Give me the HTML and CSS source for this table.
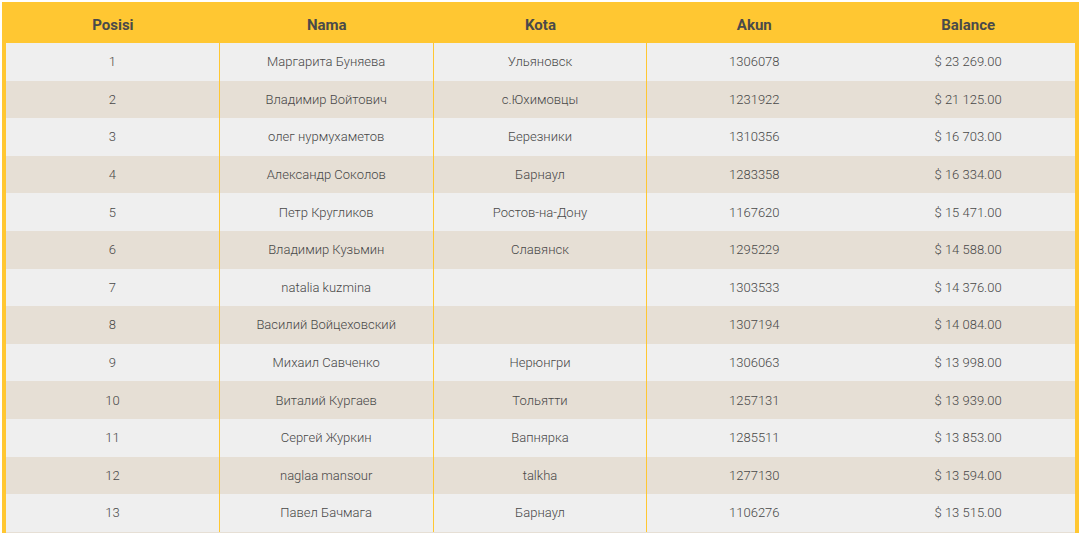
FILE: index.html
```html
<!DOCTYPE html>
<html lang="ru">
<head>
<meta charset="utf-8">
<title>Leaderboard</title>
<link rel="stylesheet" href="styles.css">
</head>
<body>
<div class="wrap">
<table class="board">
<thead>
<tr><th>Posisi</th><th>Nama</th><th>Kota</th><th>Akun</th><th>Balance</th></tr>
</thead>
<tbody>
<tr><td>1</td><td>Маргарита Буняева</td><td>Ульяновск</td><td>1306078</td><td>$ 23 269.00</td></tr>
<tr><td>2</td><td>Владимир Войтович</td><td>с.Юхимовцы</td><td>1231922</td><td>$ 21 125.00</td></tr>
<tr><td>3</td><td>олег нурмухаметов</td><td>Березники</td><td>1310356</td><td>$ 16 703.00</td></tr>
<tr><td>4</td><td>Александр Соколов</td><td>Барнаул</td><td>1283358</td><td>$ 16 334.00</td></tr>
<tr><td>5</td><td>Петр Кругликов</td><td>Ростов-на-Дону</td><td>1167620</td><td>$ 15 471.00</td></tr>
<tr><td>6</td><td>Владимир Кузьмин</td><td>Славянск</td><td>1295229</td><td>$ 14 588.00</td></tr>
<tr><td>7</td><td>natalia kuzmina</td><td></td><td>1303533</td><td>$ 14 376.00</td></tr>
<tr><td>8</td><td>Василий Войцеховский</td><td></td><td>1307194</td><td>$ 14 084.00</td></tr>
<tr><td>9</td><td>Михаил Савченко</td><td>Нерюнгри</td><td>1306063</td><td>$ 13 998.00</td></tr>
<tr><td>10</td><td>Виталий Кургаев</td><td>Тольятти</td><td>1257131</td><td>$ 13 939.00</td></tr>
<tr><td>11</td><td>Сергей Журкин</td><td>Вапнярка</td><td>1285511</td><td>$ 13 853.00</td></tr>
<tr><td>12</td><td>naglaa mansour</td><td>talkha</td><td>1277130</td><td>$ 13 594.00</td></tr>
<tr><td>13</td><td>Павел Бачмага</td><td>Барнаул</td><td>1106276</td><td>$ 13 515.00</td></tr>
</tbody>
</table>
</div>
</body>
</html>
```

FILE: styles.css
```css
html, body {
  margin: 0;
  padding: 0;
  background: #ffffff;
  overflow: hidden;
}

body {
  font-family: Roboto, "Liberation Sans", sans-serif;
}

.wrap {
  margin: 2px 1px 0 2px;
  border: 4px solid #ffc732;
  border-bottom: none;
  background: #e6dfd5;
  min-height: 560px;
}

.board {
  width: 100%;
  border-collapse: separate;
  border-spacing: 0;
  table-layout: fixed;
}

.board th {
  height: 37px;
  padding: 0;
  font-size: 15px;
  font-weight: 700;
  color: #4a4a4a;
  text-align: center;
  vertical-align: middle;
  background: #ffc732;
}

.board td {
  height: 37.6px;
  padding: 0;
  font-size: 13px;
  font-weight: 300;
  color: #484848;
  text-align: center;
  vertical-align: middle;
}

.board td:nth-child(1),
.board td:nth-child(2),
.board td:nth-child(3) {
  border-right: 1px solid #ffc732;
}

.board tbody tr:nth-child(odd) td {
  background-color: #efefef;
}

.board tbody tr:nth-child(even) td {
  background-color: #e6dfd5;
}
```
